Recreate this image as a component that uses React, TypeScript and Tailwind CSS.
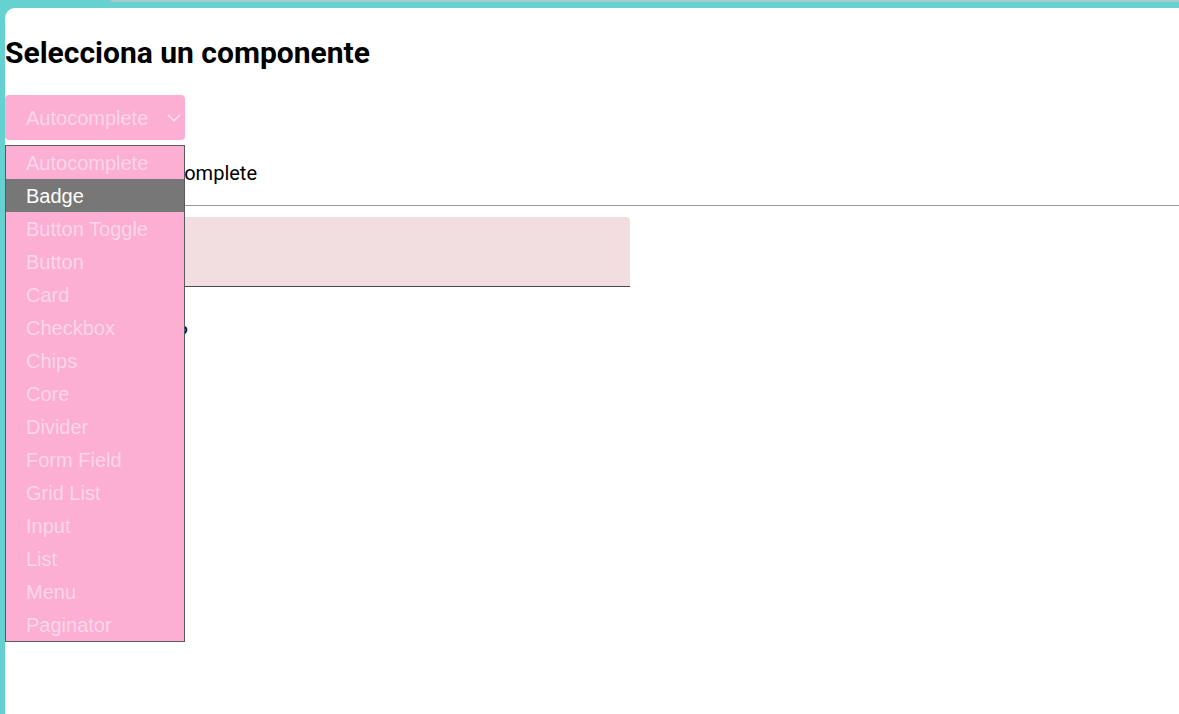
import { ChevronDown } from 'lucide-react';

const components = [
  'Autocomplete',
  'Badge',
  'Button Toggle',
  'Button',
  'Card',
  'Checkbox',
  'Chips',
  'Core',
  'Divider',
  'Form Field',
  'Grid List',
  'Input',
  'List',
  'Menu',
  'Paginator',
];

const ComponentSelect = () => {
  const selected = 'Autocomplete';
  const hovered = 'Badge';

  return (
    <div className="relative w-[180px]">
      <div className="flex h-[45px] items-center justify-between rounded-[4px] bg-[#fcaed3] pl-[21px] text-[20px] text-[#fdd6ea] font-['Liberation_Sans',Arial,sans-serif]">
        <span>{selected}</span>
        <ChevronDown size={22} strokeWidth={1.7} className="text-[#fde3ef]" />
      </div>
      <ul className="absolute left-0 top-[50px] z-10 w-[180px] border border-[#5a5a5a] bg-[#fcaed3] text-[20px] font-['Liberation_Sans',Arial,sans-serif]">
        {components.map((name) => (
          <li
            key={name}
            className={
              name === hovered
                ? 'flex h-[33px] items-center bg-[#777777] pl-[20px] text-white'
                : 'flex h-[33px] items-center pl-[20px] text-[#fdd6ea]'
            }
          >
            {name}
          </li>
        ))}
      </ul>
    </div>
  );
};

export default function App() {
  return (
    <div className="flex h-screen flex-col overflow-hidden bg-[#66d1d1] font-['Roboto',sans-serif]">
      <div className="h-[8px] shrink-0 pl-[110px]">
        <div className="h-[2px] rounded-tl-[6px] border-t-2 border-l border-[#a9c9c9]" />
      </div>
      <div className="ml-[5px] flex-1 overflow-hidden rounded-tl-[10px] bg-white">
        <h2 className="pt-[28px] text-[30px] font-bold leading-[34px] text-black">
          Selecciona un componente
        </h2>
        <div className="mt-[25px]">
          <ComponentSelect />
        </div>
        <div className="mt-[21px] flex w-[252px] justify-end whitespace-nowrap text-[20px] leading-[24px] text-black">
          <span className="shrink-0">Componente: Autocomplete</span>
        </div>
        <hr className="mt-[20px] border-t border-[#9a9a9a]" />
        <div className="mt-[11px] h-[70px] w-[625px] rounded-t-[4px] border-b border-[#4b4b4b] bg-[#f2dde0]" />
        <div className="mt-[35px] flex w-[183px] justify-end whitespace-nowrap text-[20px] leading-[24px] text-black">
          <span className="shrink-0">¿Cuál eliges?</span>
        </div>
      </div>
    </div>
  );
}
